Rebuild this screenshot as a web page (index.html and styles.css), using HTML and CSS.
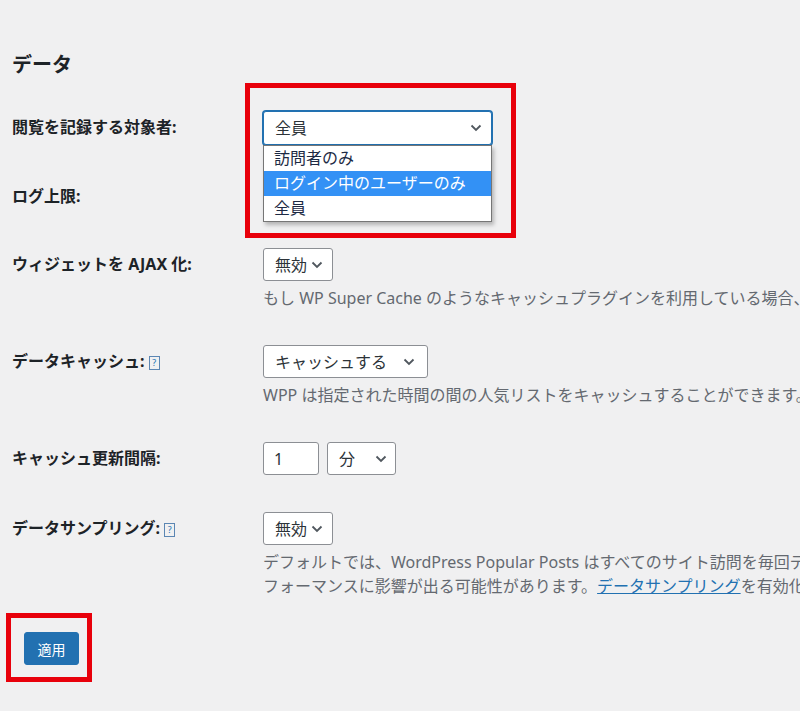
FILE: index.html
```html
<!DOCTYPE html>
<html lang="ja">
<head>
  <meta charset="UTF-8" />
  <meta name="viewport" content="width=device-width, initial-scale=1.0" />
  <title>データ設定</title>
  <link rel="stylesheet" href="styles.css">
</head>
<body>
  <div class="page">
    <h2 class="section-title">データ</h2>

    <div class="form-row">
      <div class="row-label">閲覧を記録する対象者:</div>
      <div class="row-field">
        <div class="select select-focus select-audience">
          <span>全員</span>
          <svg class="chev" width="12" height="8" viewBox="0 0 12 8"><path d="M1.5 1.5 6 6l4.5-4.5" fill="none" stroke="#50575e" stroke-width="1.8"/></svg>
        </div>
        <ul class="dropdown">
          <li>訪問者のみ</li>
          <li class="active">ログイン中のユーザーのみ</li>
          <li>全員</li>
        </ul>
      </div>
    </div>

    <div class="form-row">
      <div class="row-label">ログ上限:</div>
      <div class="row-field">
        <div class="select select-small">
          <span>無制限</span>
          <svg class="chev" width="12" height="8" viewBox="0 0 12 8"><path d="M1.5 1.5 6 6l4.5-4.5" fill="none" stroke="#50575e" stroke-width="1.8"/></svg>
        </div>
      </div>
    </div>

    <div class="form-row">
      <div class="row-label">ウィジェットを AJAX 化:</div>
      <div class="row-field">
        <div class="select select-small">
          <span>無効</span>
          <svg class="chev" width="12" height="8" viewBox="0 0 12 8"><path d="M1.5 1.5 6 6l4.5-4.5" fill="none" stroke="#50575e" stroke-width="1.8"/></svg>
        </div>
        <p class="desc">もし WP Super Cache のようなキャッシュプラグインを利用している場合、このオプションを有効にするとウィジェットが正しく表示されます。</p>
      </div>
    </div>

    <div class="form-row">
      <div class="row-label">データキャッシュ: <span class="help">?</span></div>
      <div class="row-field">
        <div class="select select-cache">
          <span>キャッシュする</span>
          <svg class="chev" width="12" height="8" viewBox="0 0 12 8"><path d="M1.5 1.5 6 6l4.5-4.5" fill="none" stroke="#50575e" stroke-width="1.8"/></svg>
        </div>
        <p class="desc">WPP は指定された時間の間の人気リストをキャッシュすることができます。キャッシュを使うとデータベースの負荷が減ります。</p>
      </div>
    </div>

    <div class="form-row row-interval">
      <div class="row-label">キャッシュ更新間隔:</div>
      <div class="row-field">
        <div class="field-group">
          <div class="input-num">1</div>
          <div class="select select-unit">
            <span>分</span>
            <svg class="chev" width="12" height="8" viewBox="0 0 12 8"><path d="M1.5 1.5 6 6l4.5-4.5" fill="none" stroke="#50575e" stroke-width="1.8"/></svg>
          </div>
        </div>
      </div>
    </div>

    <div class="form-row">
      <div class="row-label">データサンプリング: <span class="help">?</span></div>
      <div class="row-field">
        <div class="select select-small">
          <span>無効</span>
          <svg class="chev" width="12" height="8" viewBox="0 0 12 8"><path d="M1.5 1.5 6 6l4.5-4.5" fill="none" stroke="#50575e" stroke-width="1.8"/></svg>
        </div>
        <p class="desc">デフォルトでは、WordPress Popular Posts はすべてのサイト訪問を毎回データベースに保存するため、トラフィックの多いサイトではパ</p>
        <p class="desc desc-next">フォーマンスに影響が出る可能性があります。<a href="#">データサンプリング</a>を有効化するとこの負荷を減らすことができます。</p>
      </div>
    </div>

    <div class="actions">
      <button class="btn-primary">適用</button>
    </div>
  </div>

  <div class="mark mark-audience"></div>
  <div class="mark mark-apply"></div>
</body>
</html>
```

FILE: styles.css
```css
body {
  margin: 0;
  width: 800px;
  height: 711px;
  overflow: hidden;
  position: relative;
  background-color: #f0f0f1;
  font-family: "Noto Sans", "Noto Sans CJK JP", sans-serif;
  font-size: 16px;
  color: #1d2327;
}
.page {
  padding: 52px 0 0 12px;
}
.section-title {
  margin: 0 0 15px;
  font-size: 20px;
  line-height: 26px;
  font-weight: 700;
}
.form-row {
  display: grid;
  grid-template-columns: 251px 1fr;
  padding: 18px 0 17px;
}
.row-interval {
  padding-bottom: 19px;
}
.row-label {
  font-weight: 700;
  line-height: 33px;
  white-space: nowrap;
}
.row-field {
  position: relative;
  min-width: 0;
}
.help {
  display: inline-block;
  width: 9px;
  height: 12px;
  margin-left: 0;
  border: 1px solid #5b86b3;
  color: #2271b1;
  font-size: 9px;
  font-weight: 400;
  line-height: 12px;
  text-align: center;
  vertical-align: 1px;
}
.select, .input-num {
  display: flex;
  align-items: center;
  height: 33px;
  box-sizing: border-box;
  background: #fff;
  border: 1px solid #8c8f94;
  border-radius: 3px;
  color: #2c3338;
  line-height: 1;
}
.select {
  justify-content: space-between;
  padding: 0 9px 0 11px;
}
.select-focus {
  height: 34px;
  border-color: #2271b1;
  box-shadow: 0 0 0 1px #2271b1;
}
.select-audience { width: 229px; }
.select-small { width: 70px; }
.select-cache { width: 165px; padding-right: 12px; }
.select-unit { width: 69px; padding-right: 8px; }
.input-num {
  width: 56px;
  padding-left: 10px;
}
.field-group {
  display: flex;
  gap: 8px;
}
.chev {
  flex: none;
}
.dropdown {
  position: absolute;
  top: 34px;
  left: 0;
  z-index: 5;
  width: 229px;
  box-sizing: border-box;
  margin: 0;
  padding: 0;
  list-style: none;
  background: #fff;
  border: 1px solid #767676;
  box-shadow: 2px 3px 4px rgba(0, 0, 0, 0.25);
  color: #1d2a44;
}
.dropdown li {
  height: 25px;
  line-height: 25px;
  padding-left: 10px;
}
.dropdown li.active {
  background-color: #3391f5;
  color: #fff;
}
.desc {
  margin: 5px 0 0;
  line-height: 24px;
  color: #646970;
  white-space: nowrap;
}
.desc-next {
  margin-top: 0;
}
.desc a {
  color: #2271b1;
}
.actions {
  margin-top: 17px;
  padding-left: 12px;
}
.btn-primary {
  width: 55px;
  height: 33px;
  padding: 0;
  border: 1px solid #2271b1;
  border-radius: 3px;
  background-color: #2271b1;
  color: #fff;
  font-family: inherit;
  font-size: 14px;
}
.mark {
  position: absolute;
  box-sizing: border-box;
  border: 5px solid #e8000b;
  z-index: 10;
}
.mark-audience {
  left: 245px;
  top: 83px;
  width: 271px;
  height: 155px;
}
.mark-apply {
  left: 6px;
  top: 613px;
  width: 86px;
  height: 69px;
}
```
